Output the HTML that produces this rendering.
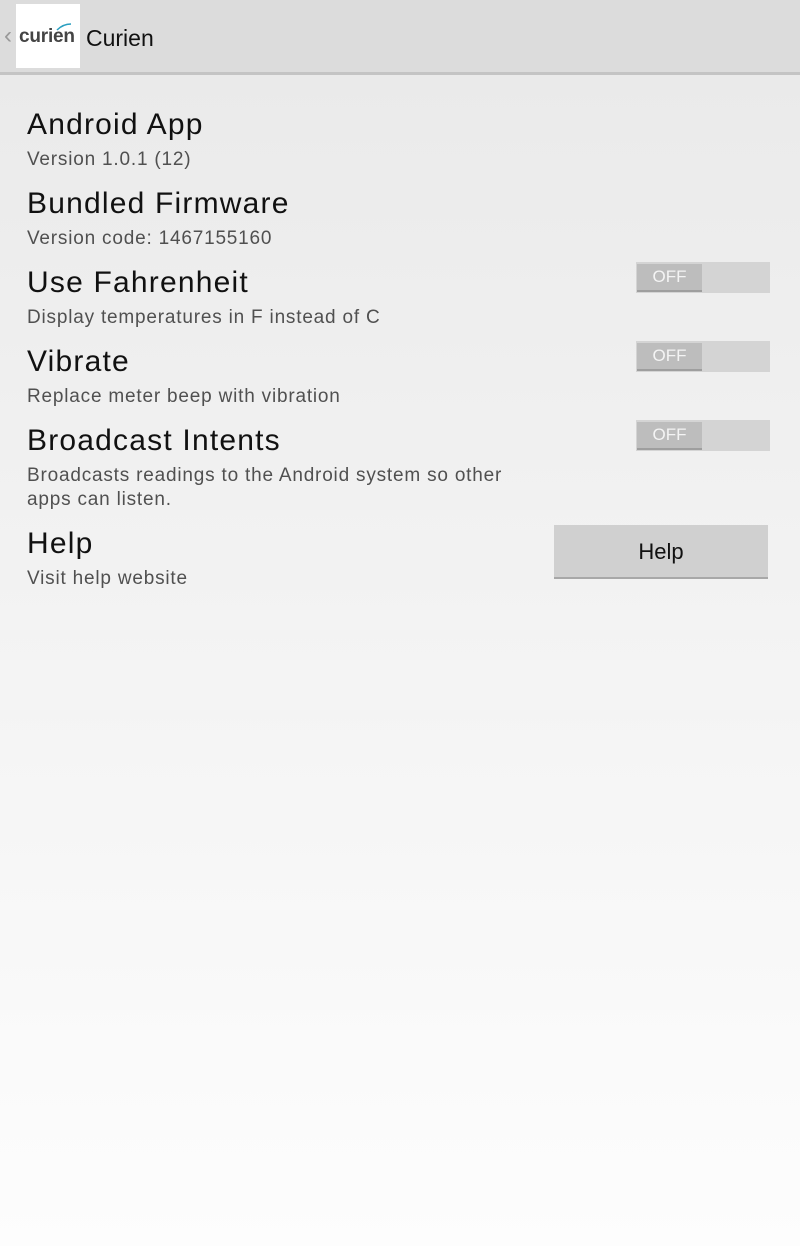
<!DOCTYPE html>
<html><head><style>
body{margin:0;width:800px;height:1246px;background:linear-gradient(#e9e9e9 0%,#f3f3f3 50%,#fdfdfd 100%);font-family:"Liberation Sans",sans-serif;position:relative;overflow:hidden}
.hdr{position:absolute;left:0;top:0;width:800px;height:72px;background:#dcdcdc;border-bottom:3px solid #c4c4c4}
.logo{position:absolute;left:16px;top:4px;width:64px;height:64px;background:#fff}
.t{position:absolute;left:27px;font-size:30px;color:#111;white-space:nowrap;letter-spacing:1.2px}
.s{position:absolute;left:27px;font-size:19px;color:#505050;line-height:24px;letter-spacing:0.8px}
.tg{position:absolute;left:636px;width:134px;height:31px;background:#d4d4d4}
.tg div{position:absolute;left:1px;top:2px;width:65px;height:26px;background:#bdbdbd;border-bottom:2px solid #9e9e9e;color:#f4f4f4;font-size:17px;text-align:center;line-height:26px}
.btn{position:absolute;left:554px;top:525px;width:214px;height:52px;background:#d0d0d0;border-bottom:2px solid #a8a8a8;font-size:22px;text-align:center;line-height:54px;color:#111}
</style></head><body>
<div class="hdr">
<div style="position:absolute;left:4px;top:22px;font-size:24px;color:#999">‹</div>
<div class="logo"><span style="position:absolute;left:3px;top:22px;font-size:19px;color:#444;font-weight:bold;letter-spacing:-0.2px">curien</span>
<svg style="position:absolute;left:40px;top:19px" width="16" height="8"><path d="M1 7 Q7 1 15 1" stroke="#2a9fc0" stroke-width="1.5" fill="none"/></svg></div>
<div style="position:absolute;left:86px;top:25px;font-size:23px;color:#111">Curien</div>
</div>
<div class="t" style="top:108px">Android App</div>
<div class="s" style="top:148px">Version 1.0.1 (12)</div>
<div class="t" style="top:187px">Bundled Firmware</div>
<div class="s" style="top:227px">Version code: 1467155160</div>
<div class="t" style="top:266px">Use Fahrenheit</div>
<div class="s" style="top:306px">Display temperatures in F instead of C</div>
<div class="tg" style="top:262px"><div>OFF</div></div>
<div class="t" style="top:345px">Vibrate</div>
<div class="s" style="top:385px">Replace meter beep with vibration</div>
<div class="tg" style="top:341px"><div>OFF</div></div>
<div class="t" style="top:424px">Broadcast Intents</div>
<div class="s" style="top:464px">Broadcasts readings to the Android system so other<br>apps can listen.</div>
<div class="tg" style="top:420px"><div>OFF</div></div>
<div class="t" style="top:527px">Help</div>
<div class="s" style="top:567px">Visit help website</div>
<div class="btn">Help</div>
</body></html>
